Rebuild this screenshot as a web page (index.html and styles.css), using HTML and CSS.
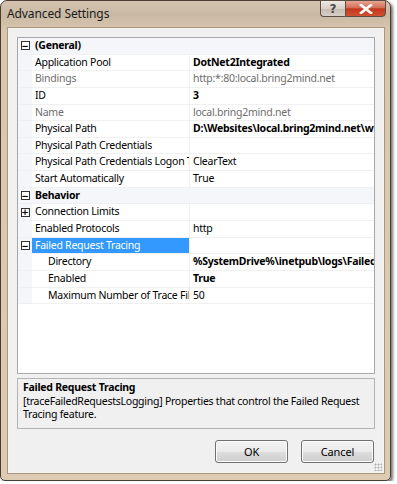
FILE: index.html
```html
<!DOCTYPE html>
<html>
<head>
<meta charset="utf-8">
<link rel="stylesheet" href="styles.css">
</head>
<body>
<div class="window">
  <div class="titlebar">
    <span class="title">Advanced Settings</span>
    <div class="caption">
      <div class="cbtn help">?</div>
      <div class="cbtn close">
        <svg width="14" height="10" viewBox="0 0 14 10"><path d="M2 1 L12 9 M12 1 L2 9" stroke="#fff" stroke-width="2.6" stroke-linecap="square"/></svg>
      </div>
    </div>
  </div>
  <div class="client">
    <div class="grid">
      <div class="row cat"><span class="gutter"><span class="box">&minus;</span></span><span class="name">(General)</span></div>
      <div class="row"><span class="gutter"></span><span class="name">Application Pool</span><span class="value b">DotNet2Integrated</span></div>
      <div class="row ro"><span class="gutter"></span><span class="name">Bindings</span><span class="value">http:*:80:local.bring2mind.net</span></div>
      <div class="row"><span class="gutter"></span><span class="name">ID</span><span class="value b">3</span></div>
      <div class="row ro"><span class="gutter"></span><span class="name">Name</span><span class="value">local.bring2mind.net</span></div>
      <div class="row"><span class="gutter"></span><span class="name">Physical Path</span><span class="value b">D:\Websites\local.bring2mind.net\www</span></div>
      <div class="row"><span class="gutter"></span><span class="name">Physical Path Credentials</span><span class="value"></span></div>
      <div class="row"><span class="gutter"></span><span class="name">Physical Path Credentials Logon Type</span><span class="value">ClearText</span></div>
      <div class="row"><span class="gutter"></span><span class="name">Start Automatically</span><span class="value">True</span></div>
      <div class="row cat"><span class="gutter"><span class="box">&minus;</span></span><span class="name">Behavior</span></div>
      <div class="row"><span class="gutter"><span class="box">+</span></span><span class="name">Connection Limits</span><span class="value"></span></div>
      <div class="row"><span class="gutter"></span><span class="name">Enabled Protocols</span><span class="value">http</span></div>
      <div class="row"><span class="gutter"><span class="box">&minus;</span></span><span class="name sel">Failed Request Tracing</span><span class="value"></span></div>
      <div class="row sub"><span class="gutter"></span><span class="name">Directory</span><span class="value b">%SystemDrive%\inetpub\logs\FailedReqLogFiles</span></div>
      <div class="row sub"><span class="gutter"></span><span class="name">Enabled</span><span class="value b">True</span></div>
      <div class="row sub"><span class="gutter"></span><span class="name">Maximum Number of Trace Files</span><span class="value">50</span></div>
    </div>
    <div class="desc">
      <div class="desc-title">Failed Request Tracing</div>
      <div class="desc-text">[traceFailedRequestsLogging] Properties that control the Failed Request Tracing feature.</div>
    </div>
    <div class="buttons">
      <button class="btn">OK</button>
      <button class="btn">Cancel</button>
    </div>
    <div class="grip"></div>
  </div>
</div>
</body>
</html>
```
FILE: styles.css
```css
html, body {
  margin: 0;
  padding: 0;
  background: #ffffff;
}
body {
  font-family: "Noto Sans", "DejaVu Sans", sans-serif;
  font-size: 10.5px;
  letter-spacing: -0.25px;
  color: #000;
}
.window {
  width: 391px;
  height: 481px;
  box-sizing: border-box;
  border: 1px solid #4a3c30;
  border-radius: 7px 7px 5px 5px;
  background: linear-gradient(180deg, #d3c3b0 0px, #c9b9a4 14px, #d9c6ae 30px, #decbb3 100%);
  box-shadow: 2px 2px 3px rgba(0,0,0,0.55);
  display: flex;
  flex-direction: column;
  padding: 0 5px 6px 6px;
}
.titlebar {
  height: 26px;
  display: flex;
  justify-content: space-between;
  align-items: flex-start;
  flex: none;
}
.title {
  font-family: "Noto Sans", sans-serif;
  font-size: 12px;
  letter-spacing: -0.1px;
  color: #1b1b1b;
  margin-top: 4px;
}
.caption {
  display: flex;
  margin-right: -1px;
  margin-top: -1px;
}
.cbtn {
  height: 17px;
  box-sizing: border-box;
  border: 1px solid #5b4e45;
  display: flex;
  align-items: center;
  justify-content: center;
}
.help {
  width: 25px;
  border-radius: 0 0 0 4px;
  border-right: none;
  background: linear-gradient(180deg, #efe9e4 0%, #d9d0c8 50%, #c6bbb2 51%, #d8cfc7 100%);
  color: #4a4a4a;
  font-weight: bold;
  font-size: 12px;
  letter-spacing: 0;
  font-family: "DejaVu Sans", sans-serif;
}
.close {
  width: 41px;
  border-radius: 0 0 4px 0;
  background: linear-gradient(180deg, #e8a493 0%, #d46e57 45%, #c4381c 52%, #d0512f 100%);
}
.client {
  flex: 1;
  background: #f0f0f0;
  border: 1px solid #a89680;
  box-shadow: inset 0 0 0 1px #f7f2ec;
  padding: 9px 9px 0 9px;
  display: flex;
  flex-direction: column;
  position: relative;
}
.grid {
  height: 337px;
  box-sizing: border-box;
  border: 1px solid #a8a8a8;
  background: #fff;
  overflow: hidden;
}
.row {
  display: flex;
  height: 16.65px;
  box-sizing: border-box;
  border-bottom: 1px solid #f0f0f0;
  line-height: 15px;
  white-space: nowrap;
}
.gutter {
  width: 14px;
  flex: none;
  background: #f4f6fa;
  display: flex;
  align-items: center;
  justify-content: center;
}
.box {
  width: 9px;
  height: 9px;
  box-sizing: border-box;
  border: 1px solid #333;
  background: #fff;
  font-size: 9px;
  letter-spacing: 0;
  line-height: 6px;
  text-align: center;
  font-family: "DejaVu Sans", sans-serif;
  font-weight: bold;
  display: flex;
  align-items: center;
  justify-content: center;
}
.name {
  width: 158px;
  flex: none;
  padding-left: 3px;
  overflow: hidden;
  box-sizing: border-box;
  border-right: 1px solid #f0f0f0;
}
.sub .name {
  padding-left: 16px;
}
.name.sel {
  background: #3399ff;
  color: #fff;
}
.value {
  flex: 1;
  padding-left: 3px;
  overflow: hidden;
}
.b {
  font-weight: bold;
}
.ro .name, .ro .value {
  color: #6d6d6d;
}
.cat {
  background: #f4f6fa;
}
.cat .name {
  font-weight: bold;
  border-right: none;
}
.desc {
  margin-top: 4px;
  height: 51px;
  box-sizing: border-box;
  border: 1px solid #b4b4b4;
  background: #f0f0f0;
  padding: 2px 5px;
  line-height: 13.5px;
}
.desc-title {
  font-weight: bold;
}
.buttons {
  display: flex;
  justify-content: flex-end;
  gap: 13px;
  margin-top: 11px;
  padding-right: 1px;
}
.btn {
  width: 73px;
  height: 23px;
  font-family: "Noto Sans", sans-serif;
  font-size: 11px;
  letter-spacing: -0.1px;
  color: #000;
  border: 1px solid #707070;
  border-radius: 3px;
  background: linear-gradient(180deg, #f2f2f2 0%, #ebebeb 50%, #dddddd 51%, #cfcfcf 100%);
  box-shadow: inset 0 0 0 1px #fcfcfc;
  padding: 0;
}
.grip {
  position: absolute;
  right: 2px;
  bottom: 2px;
  width: 8px;
  height: 8px;
  background: radial-gradient(circle, #b0b0b0 0.8px, transparent 1.2px) 0 0 / 3px 3px;
}
```
